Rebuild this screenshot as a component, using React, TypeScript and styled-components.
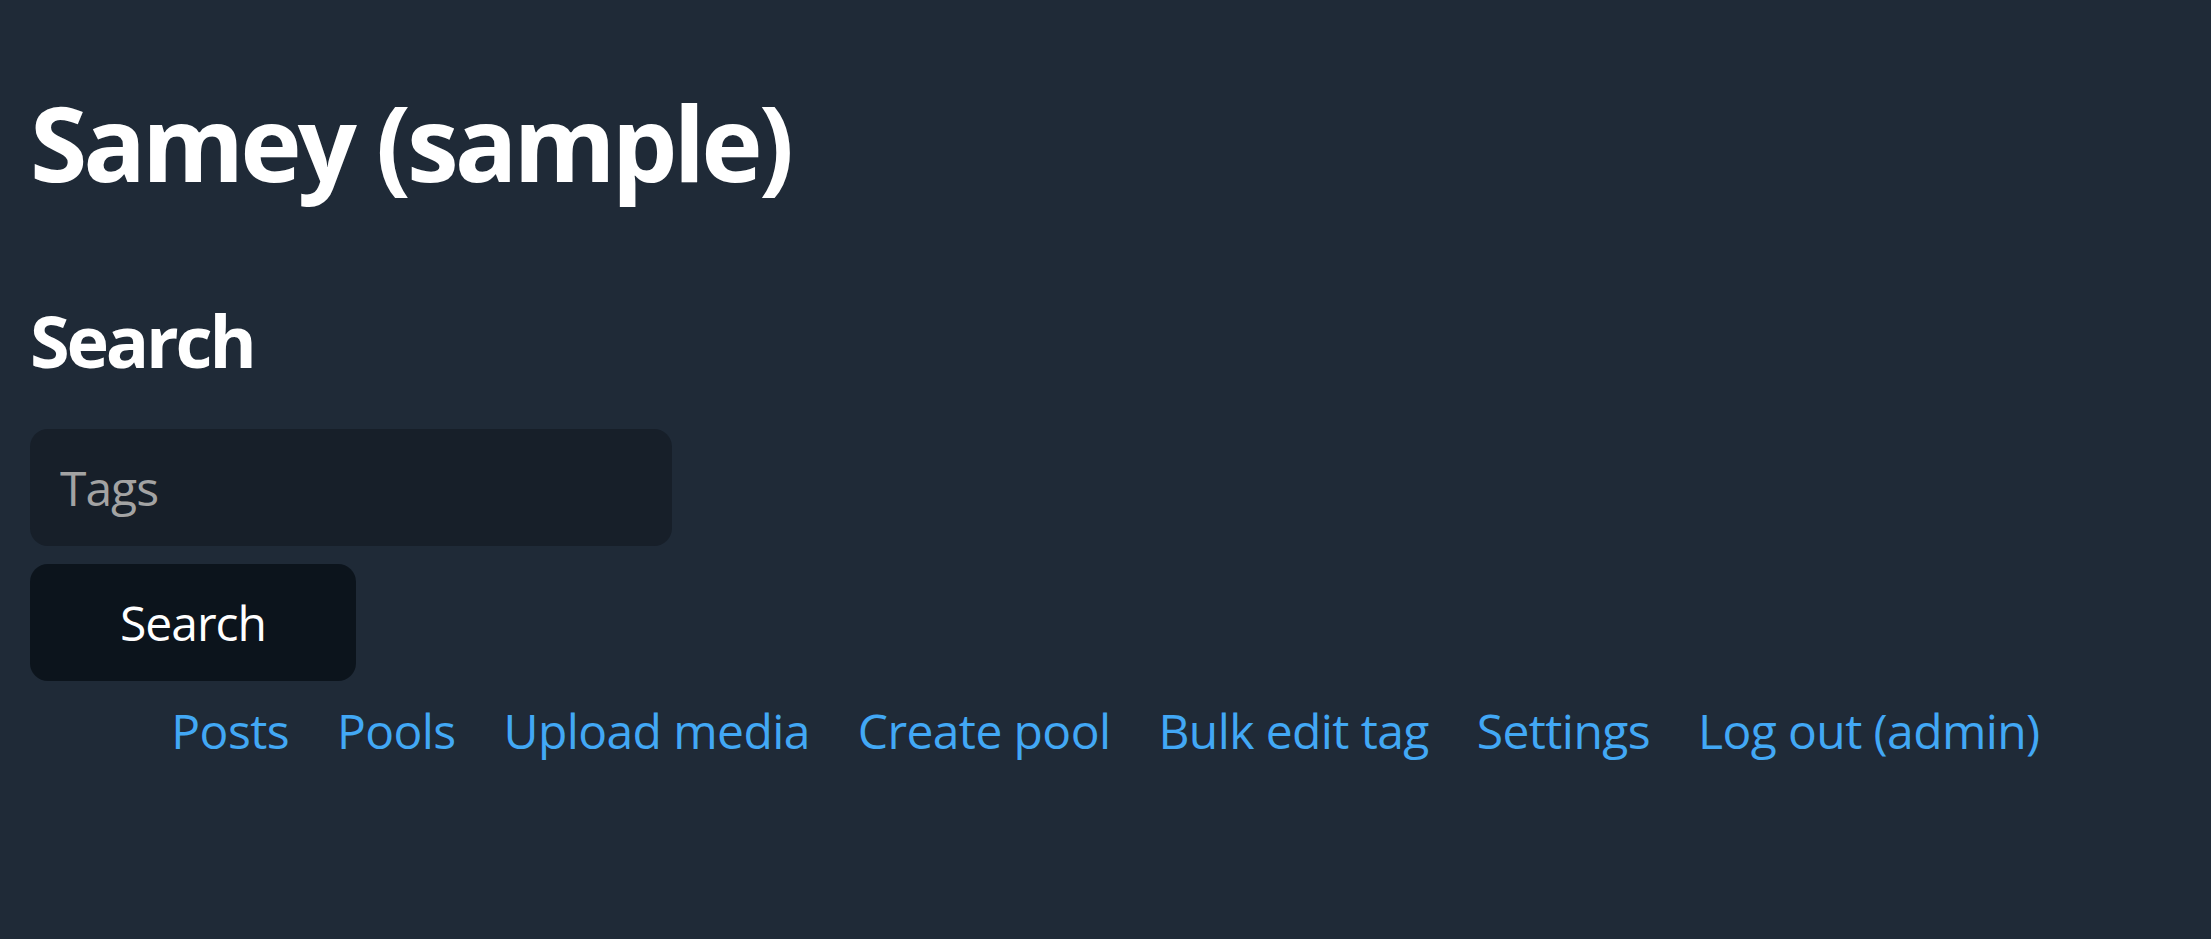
import React from "react";
import styled, { createGlobalStyle } from "styled-components";

const GlobalStyle = createGlobalStyle`
  html, body {
    margin: 0;
    padding: 0;
    background: #1f2a37;
  }
  body {
    font-family: "Open Sans", "Noto Sans", "Liberation Sans", sans-serif;
    color: #ffffff;
  }
  * { box-sizing: border-box; }
`;

const Page = styled.main`
  min-height: 939px;
  padding: 80px 30px 0;
  background: #1f2a37;
`;

const Title = styled.h1`
  margin: 0;
  font-size: 104px;
  line-height: 1.2;
  font-weight: 700;
  letter-spacing: -4px;
`;

const SectionTitle = styled.h2`
  margin: 92px 0 0;
  font-size: 72px;
  line-height: 1.2;
  font-weight: 700;
  letter-spacing: -3.2px;
`;

const SearchForm = styled.form`
  display: flex;
  flex-direction: column;
  align-items: flex-start;
  gap: 18px;
  margin-top: 46px;
`;

const TagInput = styled.input`
  width: 642px;
  height: 117px;
  padding: 0 30px;
  border: none;
  border-radius: 18px;
  background: #171f29;
  color: #ffffff;
  font-family: inherit;
  font-size: 48px;
  letter-spacing: -1px;
  outline: none;
  &::placeholder {
    color: #a3a3a3;
  }
`;

const SearchButton = styled.button`
  width: 326px;
  height: 117px;
  border: none;
  border-radius: 18px;
  background: #0c141c;
  color: #ffffff;
  font-family: inherit;
  font-size: 48px;
  letter-spacing: -1px;
  cursor: pointer;
`;

const Nav = styled.nav`
  display: flex;
  justify-content: center;
  gap: 48px;
  margin-top: 14px;
  font-size: 48px;
  line-height: 1.5;
  letter-spacing: -0.6px;
`;

const NavLink = styled.a`
  color: #42a8f5;
  text-decoration: none;
`;

const links = [
  "Posts",
  "Pools",
  "Upload media",
  "Create pool",
  "Bulk edit tag",
  "Settings",
  "Log out (admin)",
];

export default function App() {
  return (
    <>
      <GlobalStyle />
      <Page>
        <Title>Samey (sample)</Title>
        <SectionTitle>Search</SectionTitle>
        <SearchForm onSubmit={(e) => e.preventDefault()}>
          <TagInput type="text" placeholder="Tags" />
          <SearchButton type="submit">Search</SearchButton>
        </SearchForm>
        <Nav>
          {links.map((l) => (
            <NavLink key={l} href="#">
              {l}
            </NavLink>
          ))}
        </Nav>
      </Page>
    </>
  );
}
